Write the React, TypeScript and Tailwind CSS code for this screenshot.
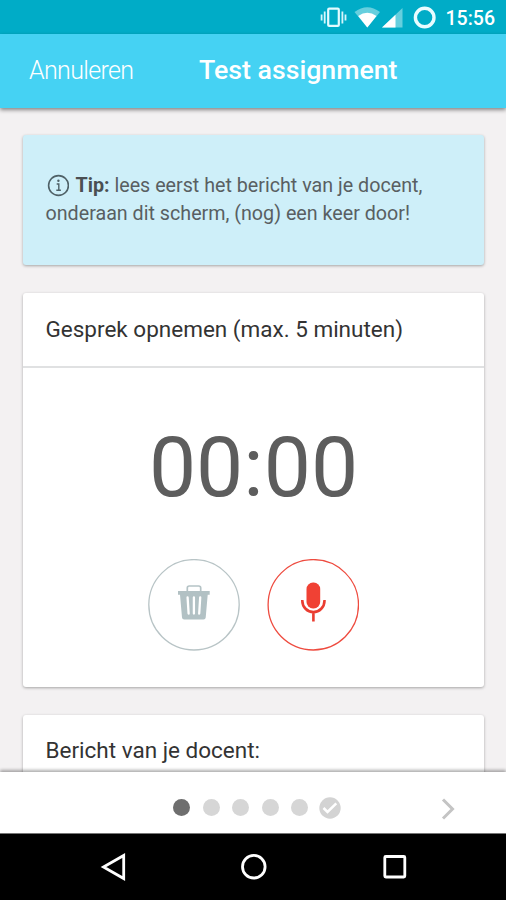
import React from 'react';

interface CardProps {
  className?: string;
  children: React.ReactNode;
}

const Card: React.FC<CardProps> = ({ className = 'bg-white', children }) => (
  <section className={`rounded-[3px] shadow-[0_1px_3px_rgba(0,0,0,0.32)] ${className}`}>{children}</section>
);

const StatusBar: React.FC = () => (
  <div className="flex h-[34px] shrink-0 items-center justify-end bg-[#00acc7] pr-[11px] text-white">
    <svg width="116" height="34" viewBox="320 0 116 34" fill="none" className="mr-[9.5px]">
      <rect x="328.2" y="8.7" width="10.6" height="17.2" rx="1" stroke="#e4fbff" strokeWidth="2.2" />
      <path d="M324.7 11.5v12M321.6 14.5v6M342.4 11.5v12M345.5 14.5v6" stroke="#d5f6fc" strokeWidth="1.8" />
      <path d="M354.5 12Q367.3 2.5 380 12L367.3 27.5Z" fill="#66cfde" />
      <path d="M358.2 16Q367.3 9.5 376.5 16L367.3 27.5Z" fill="#fff" />
      <path d="M402.5 8v19.5H382Z" fill="#66cfde" />
      <path d="M395.5 14.7v12.8H382Z" fill="#fff" />
      <circle cx="424.7" cy="17.5" r="9.3" stroke="#e9fcff" strokeWidth="3.4" />
    </svg>
    <span className="pt-[3px] text-[19.5px] leading-none font-medium">15:56</span>
  </div>
);

const Header: React.FC = () => (
  <header className="relative z-10 flex h-[74px] shrink-0 items-center bg-[#45d2f3] pb-[2px] pl-[29px] text-white shadow-[0_2px_4px_rgba(0,0,0,0.45)]">
    <button className="w-[170px] text-left text-[25px] leading-none font-light tracking-[-0.65px]">Annuleren</button>
    <h1 className="text-[26.7px] leading-none font-medium whitespace-nowrap">Test assignment</h1>
  </header>
);

const TipCard: React.FC = () => (
  <Card className="h-[130px] shrink-0 bg-[#ceeff9] pt-[37px] pl-[22.5px] text-[19.7px] leading-[28px] text-[#595f62]">
    <p className="whitespace-nowrap">
      <svg width="23" height="23" viewBox="0 0 23 23" fill="none" stroke="#4f6167" className="mr-[7px] inline-block align-[-5px]">
        <circle cx="12.5" cy="11.5" r="9.9" strokeWidth="1.6" />
        <path d="M10.7 10h2.1v6M10.3 16.3h4.6" strokeWidth="1.4" />
        <circle cx="12.4" cy="6.7" r="1.2" fill="#4f6167" stroke="none" />
      </svg>
      <b className="font-bold text-[#4b4f52]">Tip:</b> lees eerst het bericht van je docent,
      <br />
      onderaan dit scherm, (nog) een keer door!
    </p>
  </Card>
);

const RecordCard: React.FC = () => (
  <Card className="flex h-[394px] shrink-0 flex-col bg-white">
    <h2 className="flex h-[75px] items-center border-b-2 border-[#e0e1e2] pl-[22.5px] text-[22.5px] text-[#333]">
      Gesprek opnemen (max. 5 minuten)
    </h2>
    <div className="pt-[57px] text-center text-[84px] leading-[86px] text-[#5d5d5d]">00:00</div>
    <div className="mt-[48px] flex justify-center gap-[27px]">
      <button aria-label="Verwijderen">
        <svg width="92" height="92" viewBox="148 559 92 92" fill="none">
          <circle cx="194" cy="604.8" r="45.2" stroke="#b8c4c6" strokeWidth="1.3" />
          <path d="M187.3 591.5v-3.5q0-2 2-2h9.4q2 0 2 2v3.5" stroke="#b5c3c6" strokeWidth="1.7" />
          <path d="M178 591h31.7v3.8h-2l-2 22.7q-.2 2-2.2 2h-19.3q-2 0-2.2-2l-2-22.7h-2Z" fill="#b2c1c4" />
          <path d="M187.6 597.5l1 16M193.9 597.5v16M200.2 597.5l-1 16" stroke="#fff" strokeWidth="2.3" strokeLinecap="round" />
        </svg>
      </button>
      <button aria-label="Opnemen">
        <svg width="92" height="92" viewBox="267 559 92 92" fill="none">
          <circle cx="313.3" cy="604.8" r="45.2" stroke="#ee4b3f" strokeWidth="1.3" />
          <rect x="306.5" y="582.5" width="13.7" height="26" rx="6.5" fill="#f04134" />
          <path d="M302.3 600v.7a11.1 11.4 0 0 0 22.2 0v-.7M313.4 612v9.5" stroke="#ea3d31" strokeWidth="2.6" />
        </svg>
      </button>
    </div>
  </Card>
);

const Pager: React.FC = () => (
  <footer className="relative z-10 flex h-[61px] shrink-0 items-center bg-white pt-[10px] shadow-[0_-2px_3px_rgba(0,0,0,0.32)]">
    <div className="ml-[173px] flex items-center gap-[12.5px]">
      <span className="size-[17px] rounded-full bg-[#6e6e6e]" />
      {[2, 3, 4, 5].map((step) => (
        <span key={step} className="size-[17px] rounded-full bg-[#d6d6d6]" />
      ))}
    </div>
    <svg width="22" height="22" viewBox="0 0 22 22" fill="none" className="ml-[11px]">
      <circle cx="11" cy="11" r="10.7" fill="#d3d3d3" />
      <path d="M4.5 11l4 4L17.3 6.3" stroke="#fff" strokeWidth="2.5" />
    </svg>
    <svg width="16" height="24" viewBox="0 0 16 24" fill="none" stroke="#c4c4c4" strokeWidth="3" className="mt-[2px] ml-[100px]">
      <path d="M2 2.5l9.5 9.5L2 21.5" />
    </svg>
  </footer>
);

const NavBar: React.FC = () => (
  <nav className="h-[67px] shrink-0 border-t border-[#777] bg-black">
    <svg width="506" height="66" viewBox="0 834 506 66" fill="none" stroke="#fff" strokeWidth="2.8">
      <path d="M123.7 855.5v23L103.5 867Z" />
      <circle cx="253.8" cy="866.7" r="11.3" />
      <rect x="384.8" y="856.5" width="20" height="20.5" rx="1" />
    </svg>
  </nav>
);

export default function App() {
  return (
    <div className="flex h-[900px] w-[506px] flex-col overflow-hidden bg-[#f3f1f2] font-['Roboto',sans-serif]">
      <StatusBar />
      <Header />
      <main className="flex min-h-0 flex-1 flex-col gap-[28px] overflow-hidden pt-[27px] pr-[22px] pl-[23px]">
        <TipCard />
        <RecordCard />
        <Card className="h-[120px] shrink-0 bg-white">
          <h2 className="flex h-[72px] items-center pl-[22.5px] text-[22.5px] text-[#333]">Bericht van je docent:</h2>
        </Card>
      </main>
      <Pager />
      <NavBar />
    </div>
  );
}
